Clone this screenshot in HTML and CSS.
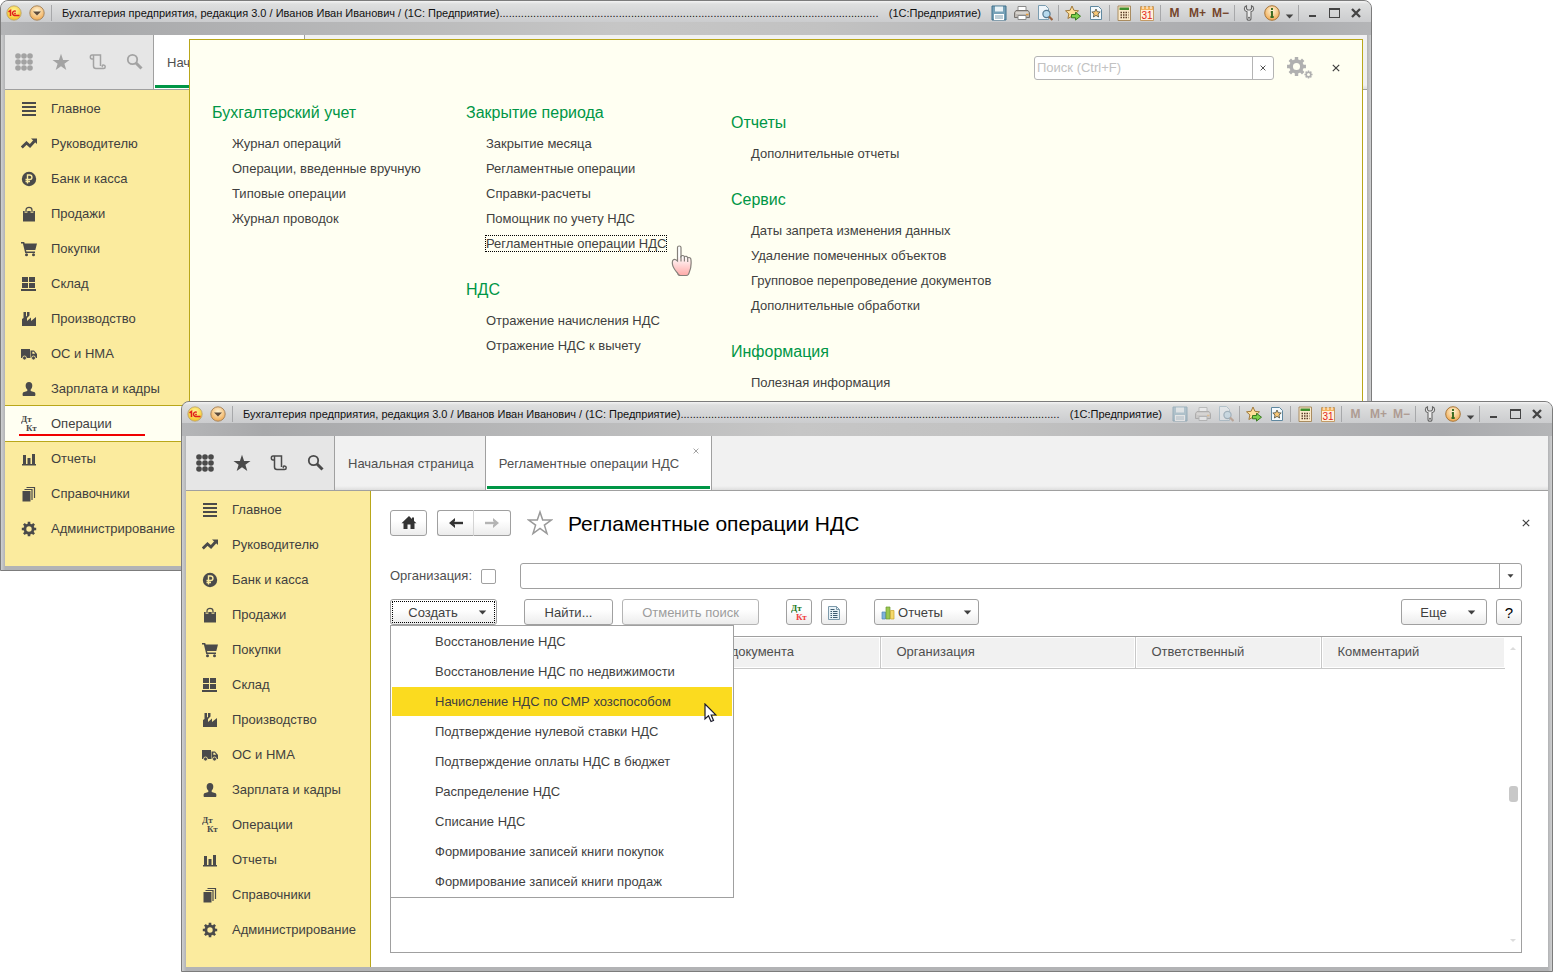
FILE: index.html
```html
<!DOCTYPE html>
<html lang="ru">
<head>
<meta charset="utf-8">
<title>Бухгалтерия предприятия, редакция 3.0</title>
<link rel="stylesheet" href="styles.css">
</head>
<body>
<svg class="sprite" aria-hidden="true">
  <defs>
    <radialGradient id="gold" cx="50%" cy="35%" r="65%"><stop offset="0" stop-color="#fff6d8"/><stop offset="1" stop-color="#f0a850"/></radialGradient>
    <radialGradient id="sun" cx="50%" cy="35%" r="65%"><stop offset="0" stop-color="#fff9a0"/><stop offset="1" stop-color="#f5c020"/></radialGradient>
    <linearGradient id="skin" x1="0" y1="0" x2="0" y2="1"><stop offset="0.35" stop-color="#fff"/><stop offset="1" stop-color="#ffaaa8"/></linearGradient>
  </defs>
  <symbol id="i-logo" viewBox="0 0 16 16"><circle cx="8" cy="8" r="7.2" fill="url(#sun)" stroke="#b5a070" stroke-width=".8"/><path d="M2.500 6.800 4.500 5.500V11M9.800 6.300a2.200 2.200 0 1 0-1.400 4.100h5.100M8.200 8.500h1.600" fill="none" stroke="#e0201b" stroke-width="1.500"/></symbol>
  <symbol id="i-down" viewBox="0 0 16 16"><circle cx="8" cy="8" r="7.2" fill="url(#gold)" stroke="#a88860" stroke-width="1"/><path d="M4 6.5h8L8 10.5z" fill="#5c4a3c"/></symbol>
  <symbol id="i-save" viewBox="0 0 16 16"><path d="M1 1h14v14H1z" fill="#78a2b8" stroke="#3f708c"/><path d="M4 1.5h8v5H4z" fill="#e9f2f6"/><path d="M3 9h10v6H3z" fill="#fff"/><path d="M4 11h8M4 13h8" stroke="#7a9cae"/></symbol>
  <symbol id="i-print" viewBox="0 0 16 16"><path d="M4 1.500h8v5H4z" fill="#fff" stroke="#8a8a8a"/><path d="M2 5.500h12l1.500 2v5H.5v-5z" fill="#bdb8b3" stroke="#77736f"/><path d="M2 8h12" stroke="#f2efe9"/><path d="M4 10.500h8v4H4z" fill="#fff" stroke="#8a8a8a"/><path d="M12 9.500h2.500" stroke="#e59a3a" stroke-width="1.500"/></symbol>
  <symbol id="i-preview" viewBox="0 0 16 16"><path d="M1.500.5h7l3 3v11h-10z" fill="#eef5fa" stroke="#7a9cb0"/><circle cx="9.500" cy="9" r="3.600" fill="#b7daee" stroke="#557a92" stroke-width="1.200"/><path d="m12 11.500 3.500 3.600" stroke="#9a6440" stroke-width="2.200"/></symbol>
  <symbol id="i-favadd" viewBox="0 0 16 16"><path d="m7 1 1.900 4.300 4.600.5-3.400 3.100 1 4.600L7 11.100l-4.100 2.400 1-4.600L.5 5.800l4.600-.5z" fill="#ffdf9a" stroke="#a07a3c"/><path d="M6.500 9.500h4V7.300l5 3.900-5 3.900v-2.300h-4z" fill="#7cd04c" stroke="#3a7a22"/></symbol>
  <symbol id="i-fav" viewBox="0 0 16 16"><path d="M2.500 1.500h8l3 3v10h-11z" fill="#f4fafd" stroke="#5f88a0"/><path d="m8 4 1.200 2.700 3 .3L10 9l.6 3L8 10.400 5.400 12 6 9 3.800 7l3-.3z" fill="#f8c878" stroke="#4c4c40" stroke-width=".8"/></symbol>
  <symbol id="i-calc" viewBox="0 0 16 16"><path d="M2 1h12.500v14.500H2z" fill="#fbeacb" stroke="#a98c60"/><path d="M3.500 2.500h9.500V5H3.500z" fill="#3f8f2c"/><path d="M4.500 7.500h8M4.500 10h8M4.500 12.500h8" stroke="#5a3d28" stroke-width="1.300" stroke-dasharray="1.500 1"/></symbol>
  <symbol id="i-cal" viewBox="0 0 16 16"><path d="M1.500 1.500h13v14h-13z" fill="#fff1dc" stroke="#c39b66"/><path d="M2 2h12v3H2z" fill="#f3b25c"/><path d="M4 1v3M8 1v3M12 1v3" stroke="#fff"/><text x="8" y="14" text-anchor="middle" class="cal-text">31</text></symbol>
  <symbol id="i-wrench" viewBox="0 0 16 16"><path d="M5.500.8c-3 1.200-2.800 5.200.5 6v6.400c0 2.700 4 2.700 4 0V6.800c3.300-.8 3.500-4.800.5-6v3L9.300 5H6.700L5.500 3.800z" fill="#ececec" stroke="#666" stroke-width="1.100"/><circle cx="8" cy="12.800" r="1" fill="#666"/></symbol>
  <symbol id="i-info" viewBox="0 0 16 16"><circle cx="8" cy="8" r="7.300" fill="url(#gold)" stroke="#a8783c"/><path d="M8 3v2M6.800 7H8v4.500M6.500 12h3.200" fill="none" stroke="#386a20" stroke-width="1.900"/></symbol>
  <symbol id="i-grid" viewBox="0 0 18 18"><g fill="currentColor"><circle cx="3" cy="3" r="2.800"/><circle cx="9" cy="3" r="2.800"/><circle cx="15" cy="3" r="2.800"/><circle cx="3" cy="9" r="2.800"/><circle cx="9" cy="9" r="2.800"/><circle cx="15" cy="9" r="2.800"/><circle cx="3" cy="15" r="2.800"/><circle cx="9" cy="15" r="2.800"/><circle cx="15" cy="15" r="2.800"/></g></symbol>
  <symbol id="i-star" viewBox="0 0 18 18"><path d="m9 .8 2.100 6.100h6.400l-5.100 3.900 1.900 6.200L9 13.300 3.700 17l1.900-6.200L.5 6.900h6.400z" fill="currentColor"/></symbol>
  <symbol id="i-scroll" viewBox="0 0 18 18"><path d="M4.500 6H3C.8 6 .8 2 3 2h8.500v11M4.500 2.500v10.500c0 1.500.8 2.500 2.500 2.500h7.500c2.300 0 2.300-3.500 0-3.500-1.500 0-1.500 1.500-.7 1.800" fill="none" stroke="currentColor" stroke-width="1.500"/></symbol>
  <symbol id="i-search" viewBox="0 0 18 18"><circle cx="6.500" cy="6.500" r="4.700" fill="none" stroke="currentColor" stroke-width="1.800"/><path d="m10 10 5.500 5.500" stroke="currentColor" stroke-width="3"/></symbol>
  <symbol id="i-main" viewBox="0 0 16 16"><path d="M1 2h14M1 6h14M1 10h14M1 14h14" stroke="currentColor" stroke-width="2"/></symbol>
  <symbol id="i-trend" viewBox="0 0 16 16"><path d="m.8 11.500 4.700-4.500 3.500 3 4.500-5" fill="none" stroke="currentColor" stroke-width="2.800"/><path d="M10 2.500h6V8z" fill="currentColor"/></symbol>
  <symbol id="i-rub" viewBox="0 0 16 16"><circle cx="8" cy="8" r="7.200" fill="currentColor"/><path d="M6.500 12.500V4h2.200c3 0 3 4.500 0 4.500H4.500M4.500 10.500H9" fill="none" stroke="#fbeb9e" stroke-width="1.400"/></symbol>
  <symbol id="i-bag" viewBox="0 0 16 16"><path d="M2 5h12v10.500H2z" fill="currentColor"/><path d="M5 7V4c0-3.500 6-3.500 6 0v3" fill="none" stroke="#fbeb9e" stroke-width="2.600"/><path d="M5 6.500V4c0-3.500 6-3.500 6 0v2.500" fill="none" stroke="currentColor" stroke-width="1.200"/></symbol>
  <symbol id="i-cart" viewBox="0 0 16 16"><path d="M0 1h3.200l.5 1.500H16L14.300 9H5l.4 1.500H14V12H4.200L1.900 2.400H0z" fill="currentColor"/><circle cx="5.500" cy="13.800" r="1.500" fill="currentColor"/><circle cx="12.500" cy="13.800" r="1.500" fill="currentColor"/></symbol>
  <symbol id="i-store" viewBox="0 0 16 16"><path d="M1 1h6v5H1zM8 1h6v5H8zM1 7h6v5H1zM8 7h6v5H8zM0 13h15v2H0z" fill="currentColor"/></symbol>
  <symbol id="i-factory" viewBox="0 0 16 16"><path d="M1 15V8l1.500-1V1H5v4.500l1-.5V1h2.500v3.500L6 7v3l4-3.500V10l5-4v9z" fill="currentColor"/></symbol>
  <symbol id="i-truck" viewBox="0 0 16 16"><path d="M0 3h9v9H0zM9.500 4.500H13l3 3.500v4H9.500z" fill="currentColor"/><path d="M11.300 5.800h1.500l1.300 2h-2.800z" fill="#fbeb9e"/><circle cx="3.500" cy="12" r="2" fill="currentColor" stroke="#fbeb9e" stroke-width=".8"/><circle cx="12.500" cy="12" r="2" fill="currentColor" stroke="#fbeb9e" stroke-width=".8"/></symbol>
  <symbol id="i-person" viewBox="0 0 16 16"><path d="M8 1c4.500 0 3.800 6 1.700 7.500V10l4 1.200c.8.300 1 3.300.3 3.800H2c-.7-.5-.5-3.500.3-3.800l4-1.200V8.500C4.200 7 3.500 1 8 1z" fill="currentColor"/></symbol>
  <symbol id="i-dtkt" viewBox="0 0 16 16"><text x="0" y="6" class="dk-text dk-text--dt">Дт</text><text x="5" y="15" class="dk-text dk-text--kt">Кт</text></symbol>
  <symbol id="i-bars" viewBox="0 0 16 16"><path d="M2 4h3v9H2zM6.500 7h3v6h-3zM11 3h3v10h-3zM1 13h14v1.500H1z" fill="currentColor"/></symbol>
  <symbol id="i-books" viewBox="0 0 16 16"><path d="M1.500 5h8v10.500h-8z" fill="currentColor"/><path d="M3.500 3.500H11V14M5.500 1.500h8V12" fill="none" stroke="currentColor" stroke-width="1.200"/></symbol>
  <symbol id="i-gear" viewBox="0 0 16 16"><circle cx="8" cy="8" r="4.100" fill="none" stroke="currentColor" stroke-width="2.800"/><path d="M8 .8v3M8 12.200v3M.8 8h3M12.200 8h3M2.900 2.900l2 2M11.100 11.100l2 2M2.900 13.100l2-2M11.100 4.900l2-2" stroke="currentColor" stroke-width="2.600"/></symbol>
  <symbol id="i-x" viewBox="0 0 10 10"><path d="m1 1 8 8M9 1 1 9" stroke="currentColor" stroke-width="1.500"/></symbol>
  <symbol id="i-xb" viewBox="0 0 10 10"><path d="m1 1 8 8M9 1 1 9" stroke="currentColor" stroke-width="2.300"/></symbol>
  <symbol id="i-caret" viewBox="0 0 10 6"><path d="M.5.500h9L5 5.500z" fill="currentColor"/></symbol>
</svg>

<div class="desktop">
  <section class="window window--back">
    <header class="titlebar">
      <svg class="ic16"><use href="#i-logo"/></svg>
      <button class="tb tb--menu" aria-label="Меню"><svg class="ic16"><use href="#i-down"/></svg></button>
      <i class="sep sep--title"></i>
      <span class="title">Бухгалтерия предприятия, редакция 3.0 / Иванов Иван Иванович / (1С: Предприятие)............................................................................................................................</span>
      <span class="title-app">(1С:Предприятие)</span>
      <div class="tb-group">
        <button class="tb" aria-label="Сохранить"><svg class="ic16"><use href="#i-save"/></svg></button>
        <button class="tb" aria-label="Печать"><svg class="ic16"><use href="#i-print"/></svg></button>
        <button class="tb" aria-label="Просмотр"><svg class="ic16"><use href="#i-preview"/></svg></button>
        <i class="sep"></i>
        <button class="tb" aria-label="В избранное"><svg class="ic16"><use href="#i-favadd"/></svg></button>
        <button class="tb" aria-label="Избранное"><svg class="ic16"><use href="#i-fav"/></svg></button>
        <i class="sep"></i>
        <button class="tb" aria-label="Калькулятор"><svg class="ic16"><use href="#i-calc"/></svg></button>
        <button class="tb" aria-label="Календарь"><svg class="ic16"><use href="#i-cal"/></svg></button>
        <i class="sep"></i>
        <button class="tb tb--mem">M</button>
        <button class="tb tb--mem">M+</button>
        <button class="tb tb--mem">M−</button>
        <i class="sep"></i>
        <button class="tb" aria-label="Сервис"><svg class="ic16"><use href="#i-wrench"/></svg></button>
        <button class="tb" aria-label="Справка"><svg class="ic16"><use href="#i-info"/></svg></button>
        <button class="tb tb--more" aria-label="Ещё"><svg class="caret"><use href="#i-caret"/></svg></button>
        <i class="sep"></i>
        <button class="tb tb--win" aria-label="Свернуть"><i class="win-min"></i></button>
        <button class="tb tb--win" aria-label="Развернуть"><i class="win-max"></i></button>
        <button class="tb tb--win" aria-label="Закрыть"><svg class="ic10"><use href="#i-xb"/></svg></button>
      </div>
    </header>
    <div class="client">
      <div class="tabs">
        <div class="tools tools--dim">
          <button class="tool" aria-label="Разделы"><svg class="ic18"><use href="#i-grid"/></svg></button>
          <button class="tool" aria-label="Избранное"><svg class="ic18"><use href="#i-star"/></svg></button>
          <button class="tool" aria-label="История"><svg class="ic18"><use href="#i-scroll"/></svg></button>
          <button class="tool" aria-label="Поиск"><svg class="ic18"><use href="#i-search"/></svg></button>
        </div>
        <a class="tab tab--active" href="#">Начальная страница</a>
      </div>
      <div class="work">
        <nav class="side">
          <a class="side-item" href="#"><svg class="ic16"><use href="#i-main"/></svg>Главное</a>
          <a class="side-item" href="#"><svg class="ic16"><use href="#i-trend"/></svg>Руководителю</a>
          <a class="side-item" href="#"><svg class="ic16"><use href="#i-rub"/></svg>Банк и касса</a>
          <a class="side-item" href="#"><svg class="ic16"><use href="#i-bag"/></svg>Продажи</a>
          <a class="side-item" href="#"><svg class="ic16"><use href="#i-cart"/></svg>Покупки</a>
          <a class="side-item" href="#"><svg class="ic16"><use href="#i-store"/></svg>Склад</a>
          <a class="side-item" href="#"><svg class="ic16"><use href="#i-factory"/></svg>Производство</a>
          <a class="side-item" href="#"><svg class="ic16"><use href="#i-truck"/></svg>ОС и НМА</a>
          <a class="side-item" href="#"><svg class="ic16"><use href="#i-person"/></svg>Зарплата и кадры</a>
          <a class="side-item side-item--current" href="#"><svg class="ic16"><use href="#i-dtkt"/></svg>Операции</a>
          <a class="side-item" href="#"><svg class="ic16"><use href="#i-bars"/></svg>Отчеты</a>
          <a class="side-item" href="#"><svg class="ic16"><use href="#i-books"/></svg>Справочники</a>
          <a class="side-item" href="#"><svg class="ic16"><use href="#i-gear"/></svg>Администрирование</a>
        </nav>
      </div>
      <div class="panel">
        <div class="panel-top">
          <div class="search">
            <input class="search-input" type="text" placeholder="Поиск (Ctrl+F)" aria-label="Поиск">
            <button class="search-clear" aria-label="Очистить"><svg class="ic6"><use href="#i-x"/></svg></button>
          </div>
          <button class="plain gears" aria-label="Настройка"><svg class="gear-big"><use href="#i-gear"/></svg><svg class="gear-small"><use href="#i-gear"/></svg></button>
          <button class="plain" aria-label="Закрыть"><svg class="ic8"><use href="#i-x"/></svg></button>
        </div>
        <div class="panel-cols">
          <div class="col">
            <section class="group">
              <h2 class="group-title">Бухгалтерский учет</h2>
              <a class="cmd" href="#">Журнал операций</a>
              <a class="cmd" href="#">Операции, введенные вручную</a>
              <a class="cmd" href="#">Типовые операции</a>
              <a class="cmd" href="#">Журнал проводок</a>
            </section>
          </div>
          <div class="col">
            <section class="group">
              <h2 class="group-title">Закрытие периода</h2>
              <a class="cmd" href="#">Закрытие месяца</a>
              <a class="cmd" href="#">Регламентные операции</a>
              <a class="cmd" href="#">Справки-расчеты</a>
              <a class="cmd" href="#">Помощник по учету НДС</a>
              <a class="cmd" href="#"><span class="cmd-focus">Регламентные операции НДС<svg class="hand" viewBox="0 0 24 32"><path d="M6.500 2.500c0-2 3.500-2 3.500 0v9c1-1.500 3-1.200 3.400.3 1.200-1 3-.5 3.300 1 1.500-.7 3.300-.2 3.300 2.200.5 6 0 9-1.800 12.500-.5 2.500-1 3-3 3H9.500c-2 0-2.500-.5-3-2.500C4 25 2 23 1.500 19.500c-.8-5 1.500-6.500 5-3.500z" fill="url(#skin)" stroke="#85807a" stroke-width="1.200"/><path d="M10 11v5.500M13.400 12v4.500M16.700 13v4" fill="none" stroke="#85807a" stroke-width="1.200"/></svg></span></a>
            </section>
            <section class="group">
              <h2 class="group-title">НДС</h2>
              <a class="cmd" href="#">Отражение начисления НДС</a>
              <a class="cmd" href="#">Отражение НДС к вычету</a>
            </section>
          </div>
          <div class="col col--lower">
            <section class="group">
              <h2 class="group-title">Отчеты</h2>
              <a class="cmd" href="#">Дополнительные отчеты</a>
            </section>
            <section class="group">
              <h2 class="group-title">Сервис</h2>
              <a class="cmd" href="#">Даты запрета изменения данных</a>
              <a class="cmd" href="#">Удаление помеченных объектов</a>
              <a class="cmd" href="#">Групповое перепроведение документов</a>
              <a class="cmd" href="#">Дополнительные обработки</a>
            </section>
            <section class="group">
              <h2 class="group-title">Информация</h2>
              <a class="cmd" href="#">Полезная информация</a>
            </section>
          </div>
        </div>
      </div>
    </div>
  </section>

  <section class="window window--front">
    <header class="titlebar">
      <svg class="ic16"><use href="#i-logo"/></svg>
      <button class="tb tb--menu" aria-label="Меню"><svg class="ic16"><use href="#i-down"/></svg></button>
      <i class="sep sep--title"></i>
      <span class="title">Бухгалтерия предприятия, редакция 3.0 / Иванов Иван Иванович / (1С: Предприятие)............................................................................................................................</span>
      <span class="title-app">(1С:Предприятие)</span>
      <div class="tb-group">
        <button class="tb" disabled aria-label="Сохранить"><svg class="ic16"><use href="#i-save"/></svg></button>
        <button class="tb" disabled aria-label="Печать"><svg class="ic16"><use href="#i-print"/></svg></button>
        <button class="tb" disabled aria-label="Просмотр"><svg class="ic16"><use href="#i-preview"/></svg></button>
        <i class="sep"></i>
        <button class="tb" aria-label="В избранное"><svg class="ic16"><use href="#i-favadd"/></svg></button>
        <button class="tb" aria-label="Избранное"><svg class="ic16"><use href="#i-fav"/></svg></button>
        <i class="sep"></i>
        <button class="tb" aria-label="Калькулятор"><svg class="ic16"><use href="#i-calc"/></svg></button>
        <button class="tb" aria-label="Календарь"><svg class="ic16"><use href="#i-cal"/></svg></button>
        <i class="sep"></i>
        <button class="tb tb--mem" disabled>M</button>
        <button class="tb tb--mem" disabled>M+</button>
        <button class="tb tb--mem" disabled>M−</button>
        <i class="sep"></i>
        <button class="tb" aria-label="Сервис"><svg class="ic16"><use href="#i-wrench"/></svg></button>
        <button class="tb" aria-label="Справка"><svg class="ic16"><use href="#i-info"/></svg></button>
        <button class="tb tb--more" aria-label="Ещё"><svg class="caret"><use href="#i-caret"/></svg></button>
        <i class="sep"></i>
        <button class="tb tb--win" aria-label="Свернуть"><i class="win-min"></i></button>
        <button class="tb tb--win" aria-label="Развернуть"><i class="win-max"></i></button>
        <button class="tb tb--win" aria-label="Закрыть"><svg class="ic10"><use href="#i-xb"/></svg></button>
      </div>
    </header>
    <div class="client">
      <div class="tabs">
        <div class="tools">
          <button class="tool" aria-label="Разделы"><svg class="ic18"><use href="#i-grid"/></svg></button>
          <button class="tool" aria-label="Избранное"><svg class="ic18"><use href="#i-star"/></svg></button>
          <button class="tool" aria-label="История"><svg class="ic18"><use href="#i-scroll"/></svg></button>
          <button class="tool" aria-label="Поиск"><svg class="ic18"><use href="#i-search"/></svg></button>
        </div>
        <a class="tab" href="#">Начальная страница</a>
        <a class="tab tab--active tab--closable" href="#">Регламентные операции НДС<svg class="tab-close"><use href="#i-x"/></svg></a>
      </div>
      <div class="work">
        <nav class="side">
          <a class="side-item" href="#"><svg class="ic16"><use href="#i-main"/></svg>Главное</a>
          <a class="side-item" href="#"><svg class="ic16"><use href="#i-trend"/></svg>Руководителю</a>
          <a class="side-item" href="#"><svg class="ic16"><use href="#i-rub"/></svg>Банк и касса</a>
          <a class="side-item" href="#"><svg class="ic16"><use href="#i-bag"/></svg>Продажи</a>
          <a class="side-item" href="#"><svg class="ic16"><use href="#i-cart"/></svg>Покупки</a>
          <a class="side-item" href="#"><svg class="ic16"><use href="#i-store"/></svg>Склад</a>
          <a class="side-item" href="#"><svg class="ic16"><use href="#i-factory"/></svg>Производство</a>
          <a class="side-item" href="#"><svg class="ic16"><use href="#i-truck"/></svg>ОС и НМА</a>
          <a class="side-item" href="#"><svg class="ic16"><use href="#i-person"/></svg>Зарплата и кадры</a>
          <a class="side-item" href="#"><svg class="ic16"><use href="#i-dtkt"/></svg>Операции</a>
          <a class="side-item" href="#"><svg class="ic16"><use href="#i-bars"/></svg>Отчеты</a>
          <a class="side-item" href="#"><svg class="ic16"><use href="#i-books"/></svg>Справочники</a>
          <a class="side-item" href="#"><svg class="ic16"><use href="#i-gear"/></svg>Администрирование</a>
        </nav>
        <main class="form">
          <div class="form-head">
            <button class="btn btn--home" aria-label="Домой"><svg class="ic16" viewBox="0 0 16 16"><path d="M8 1 .5 8.200h2V14h4V9.500h3V14h4V8.200h2L13 6V2.500h-2V4z" fill="#333"/></svg></button>
            <div class="nav-pair">
              <button class="btn" aria-label="Назад"><svg class="ic16" viewBox="0 0 16 16"><path d="M3 8h12" stroke="#333" stroke-width="2.400"/><path d="M1 8l6-5v3L5 8l2 2v3z" fill="#333"/></svg></button>
              <button class="btn" aria-label="Вперед"><svg class="ic16" viewBox="0 0 16 16"><path d="M1 8h12" stroke="#b4b4b4" stroke-width="2.400"/><path d="M15 8 9 3v3l2 2-2 2v3z" fill="#b4b4b4"/></svg></button>
            </div>
            <button class="plain fav" aria-label="В избранное"><svg class="fav-star" viewBox="0 0 26 26"><path d="m13 2 2.700 8h8.600l-6.900 5.100 2.600 8.400-7-5.100-7 5.100 2.600-8.400L1.700 10h8.600z" fill="#fff" stroke="#999" stroke-width="1.500"/></svg></button>
            <h1 class="form-title">Регламентные операции НДС</h1>
            <button class="plain form-close" aria-label="Закрыть"><svg class="ic8"><use href="#i-x"/></svg></button>
          </div>
          <div class="filter">
            <label class="filter-label" for="org-on">Организация:</label>
            <input class="check" type="checkbox" id="org-on">
            <div class="combo">
              <input class="combo-input" type="text" aria-label="Организация">
              <button class="combo-drop" aria-label="Выбрать"><svg class="caret caret--small"><use href="#i-caret"/></svg></button>
            </div>
          </div>
          <div class="commands">
            <div class="create">
              <button class="btn btn--create">Создать<svg class="caret"><use href="#i-caret"/></svg></button>
              <ul class="menu">
                <li><button class="menu-item">Восстановление НДС</button></li>
                <li><button class="menu-item">Восстановление НДС по недвижимости</button></li>
                <li><button class="menu-item menu-item--hot">Начисление НДС по СМР хозспособом</button></li>
                <li><button class="menu-item">Подтверждение нулевой ставки НДС</button></li>
                <li><button class="menu-item">Подтверждение оплаты НДС в бюджет</button></li>
                <li><button class="menu-item">Распределение НДС</button></li>
                <li><button class="menu-item">Списание НДС</button></li>
                <li><button class="menu-item">Формирование записей книги покупок</button></li>
                <li><button class="menu-item">Формирование записей книги продаж</button></li>
              </ul>
              <svg class="pointer" viewBox="0 0 13 20"><path d="M1 1v15l3.500-3.200L7 18.500l2.500-1L7.200 12H12z" fill="#fff" stroke="#1c1c2c" stroke-width="1.200"/></svg>
            </div>
            <button class="btn btn--find">Найти...</button>
            <button class="btn btn--cancel" disabled>Отменить поиск</button>
            <button class="btn btn--icon btn--dtkt" aria-label="Проводки"><svg class="ic16"><use href="#i-dtkt"/></svg></button>
            <button class="btn btn--icon" aria-label="Реестр"><svg class="ic16" viewBox="0 0 16 16"><path d="M2.500 1.500h8l3 3v10h-11z" fill="#e8f2f7" stroke="#7d9aab"/><path d="M10.500 1.500v3h3" fill="none" stroke="#7d9aab"/><path d="M4.500 4.500h4M4.500 6.500h1.500M7 6.500h4.500M4.500 8.500h1.500M7 8.500h4.500M4.500 10.500h1.500M7 10.500h4.500M4.500 12.500h1.500M7 12.500h4.500" stroke="#3e5c70"/></svg></button>
            <button class="btn btn--reports"><svg class="ic14" viewBox="0 0 14 14"><path d="M1 6h3.500v7H1z" fill="#7fb2dc" stroke="#4d86b8" stroke-width=".7"/><path d="M5 1h4v12H5z" fill="#9bc850" stroke="#6c9a30" stroke-width=".7"/><path d="M9.500 4.500H13V13H9.500z" fill="#f5d86a" stroke="#c9a32a" stroke-width=".7"/></svg>Отчеты<svg class="caret"><use href="#i-caret"/></svg></button>
            <button class="btn btn--more">Еще<svg class="caret"><use href="#i-caret"/></svg></button>
            <button class="btn btn--icon btn--help">?</button>
          </div>
          <div class="grid">
            <table class="table">
              <colgroup><col class="c-lead"><col class="c-doc"><col class="c-org"><col class="c-resp"><col></colgroup>
              <thead><tr><th></th><th>Вид документа</th><th>Организация</th><th>Ответственный</th><th>Комментарий</th></tr></thead>
            </table>
            <div class="scroll">
              <i class="scroll-up"></i><i class="scroll-thumb"></i><i class="scroll-down"></i>
            </div>
          </div>
        </main>
      </div>
    </div>
  </section>
</div>
</body>
</html>
```
FILE: styles.css
```css
* { box-sizing: border-box; }

body {
  margin: 0;
  background: #fff;
  color: #3f3f3f;
  font: 13px/16px "Liberation Sans", Arial, sans-serif;
}

a { color: inherit; text-decoration: none; }

button, input {
  margin: 0;
  padding: 0;
  border: 0;
  background: none;
  color: inherit;
  font: inherit;
}

svg { flex: none; display: block; }

.sprite { position: absolute; width: 0; height: 0; }
.ic6 { width: 6px; height: 6px; }
.ic8 { width: 8px; height: 8px; }
.ic10 { width: 10px; height: 10px; }
.ic14 { width: 14px; height: 14px; }
.ic16 { width: 16px; height: 16px; }
.ic18 { width: 18px; height: 18px; }
.caret { width: 9px; height: 5px; }
.caret--small { width: 7px; height: 4px; }

.cal-text { font: 10px "Liberation Sans", sans-serif; fill: #e2231a; }
.dk-text { font: bold 9px "Liberation Serif", serif; fill: currentColor; }
.dk-text--dt { fill: var(--dt, currentColor); }
.dk-text--kt { fill: var(--kt, currentColor); }

.desktop { position: relative; min-height: 100vh; overflow: hidden; }

/* Window frame */
.window {
  position: absolute;
  padding: 0 4px 4px;
  border: 1px solid #7c7c7c;
  border-radius: 8px 8px 0 0;
  background: linear-gradient(90deg, #cfd0d1, #b2b3b5 4px, #b2b3b5 calc(100% - 4px), #cfd0d1);
}
.window--back { left: 0; right: 187px; top: 0; }
.window--front { left: 181px; right: 6px; top: 401px; }

.titlebar {
  display: flex;
  align-items: center;
  height: 34px;
  margin: 0 -4px;
  padding: 0 4px 10px 5px;
  border-radius: 7px 7px 0 0;
  background:
    linear-gradient(#f4f4f4, #dedfdf 3px, #cbccce 21px) top / 100% 21px no-repeat,
    linear-gradient(90deg, #b4b5b7, #a8a9ab 6%, #c6c6c6 45%, #c2c2c2 60%, #a9aaad 92%, #b4b5b7);
  color: #111;
  font-size: 11px;
}
.tb {
  display: flex;
  align-items: center;
  justify-content: center;
  flex: none;
  width: 23px;
  height: 22px;
}
.tb:disabled { opacity: .4; }
.tb--menu { margin-left: 3px; }
.tb--mem { color: #75452c; font-weight: bold; font-size: 12px; }
.tb--more { width: 13px; padding-top: 6px; color: #444; }
.tb--win { width: 22px; color: #444; }
.tb-group { display: flex; align-items: center; flex: none; margin-left: 6px; }
.sep { flex: none; width: 1px; height: 16px; margin: 0 2px; background: #a7a8aa; }
.sep--title { margin: 0 10px 0 3px; }
.title { flex: 1 1 0; overflow: hidden; white-space: nowrap; }
.title-app { flex: none; margin-left: 5px; }
.win-min { width: 7px; height: 2px; margin-top: 6px; background: #444; }
.win-max { width: 11px; height: 10px; border: 1px solid #444; border-top-width: 2px; }

.client { position: relative; background: #fff; }

/* Tab strip */
.tabs {
  display: flex;
  height: 55px;
  border-bottom: 1px solid #a0a0a0;
  background: linear-gradient(#f1f1f1 50px, #dedede);
}
.tools {
  display: flex;
  align-items: center;
  width: 149px;
  border-right: 1px solid #a0a0a0;
  background: #e6e6e6;
  color: #4a4a4a;
}
.tools--dim { color: #a3a3a3; }
.tool { display: flex; justify-content: center; width: 37px; }
.tab {
  position: relative;
  display: flex;
  align-items: center;
  padding: 2px 11px 0 13px;
  border-right: 1px solid #a0a0a0;
  color: #4f4f4f;
}
.tab--active { background: #fff; }
.tab--active::after {
  content: "";
  position: absolute;
  left: 1px;
  right: 1px;
  bottom: 1px;
  height: 3px;
  background: #009646;
}
.tab--closable { padding-right: 32px; }
.tab-close { position: absolute; top: 12px; right: 12px; width: 6px; height: 6px; color: #999; }

.work { display: flex; }

/* Sections */
.side {
  flex: none;
  width: 185px;
  padding: 1px 0 20px;
  border-right: 1px solid #b9a71a;
  background: #fbeb9e;
}
.side-item {
  position: relative;
  display: flex;
  align-items: center;
  gap: 14px;
  height: 35px;
  padding-left: 16px;
  white-space: nowrap;
}
.side-item svg { color: #4a4a4a; }
.side-item--current { background: #fffff2; box-shadow: 0 -1px #b9a71a, 0 1px #b9a71a; }
.side-item--current::after {
  content: "";
  position: absolute;
  left: 14px;
  bottom: 5px;
  width: 126px;
  height: 2px;
  background: #f00000;
}

/* Section panel */
.panel {
  position: absolute;
  left: 184px;
  right: 4px;
  top: 4px;
  bottom: 0;
  border: 1px solid #b9a71a;
  background: #fffff2;
}
.panel-top {
  display: flex;
  align-items: center;
  justify-content: flex-end;
  height: 56px;
  padding-right: 22px;
}
.plain { display: flex; align-items: center; }
.search {
  display: flex;
  width: 240px;
  height: 24px;
  border: 1px solid #b4b4b4;
  border-radius: 3px;
  background: #fff;
}
.search-input { flex: 1; min-width: 0; padding: 0 2px; }
.search-input::placeholder { color: #c2c2c2; opacity: 1; }
.search-clear {
  display: flex;
  align-items: center;
  justify-content: center;
  width: 21px;
  border-left: 1px solid #b4b4b4;
  border-radius: 0 3px 3px 0;
}
.gears { margin: 0 19px 0 12px; color: #b0b0b0; }
.gear-big { width: 21px; height: 21px; margin-bottom: 4px; }
.gear-small { width: 9px; height: 9px; margin: 12px 0 0 -3px; }
.panel-cols {
  display: grid;
  grid-template-columns: 254px 265px 1fr;
  padding: 5px 22px 0;
}
.col { display: flex; flex-direction: column; gap: 22px; }
.col--lower { padding-top: 10px; }
.group-title {
  margin: 0 0 6px;
  color: #009646;
  font-weight: normal;
  font-size: 16px;
  line-height: 24px;
}
.cmd { display: block; padding-left: 20px; line-height: 25px; white-space: nowrap; }
.cmd-focus { position: relative; outline: 1px dotted #000; }
.hand { position: absolute; left: calc(100% + 5px); top: 9px; width: 24px; height: 32px; }

/* Form */
.form {
  display: flex;
  flex-direction: column;
  flex: 1;
  min-width: 0;
  padding: 19px 26px 14px 19px;
}
.form-head { display: flex; align-items: center; height: 26px; margin-right: -8px; }
.btn {
  display: flex;
  align-items: center;
  justify-content: center;
  height: 26px;
  border: 1px solid #a0a0a0;
  border-radius: 3px;
  background: linear-gradient(#fff 40%, #ececec);
  color: #3f3f3f;
}
.btn:disabled { border-color: #b4b4b4; color: #9c9c9c; }
.btn--home { width: 37px; margin-right: 10px; }
.nav-pair { display: flex; }
.nav-pair .btn { width: 37px; }
.nav-pair .btn:first-child { border-right-color: #d4d4d4; border-radius: 3px 0 0 3px; }
.nav-pair .btn:last-child { border-left: 0; border-radius: 0 3px 3px 0; }
.fav { margin: 0 15px 0 16px; }
.fav-star { width: 26px; height: 26px; }
.form-title { margin: 0; padding-top: 2px; color: #000; font-weight: normal; font-size: 21px; line-height: 26px; }
.form-close { margin-left: auto; }

.filter { display: flex; align-items: center; margin-top: 27px; }
.filter-label { width: 91px; color: #4f4f4f; }
.check {
  appearance: none;
  width: 15px;
  height: 15px;
  margin-right: 24px;
  border: 1px solid #a0a0a0;
  border-radius: 2px;
  background: #fff;
}
.combo {
  display: flex;
  flex: 1;
  height: 26px;
  border: 1px solid #a0a0a0;
  border-radius: 3px;
}
.combo-input { flex: 1; min-width: 0; padding: 0 4px; }
.combo-drop {
  display: flex;
  align-items: center;
  justify-content: center;
  width: 22px;
  border-left: 1px solid #a0a0a0;
}

.commands { display: flex; margin-top: 10px; }
.commands .btn { padding-top: 1px; }
.create { position: relative; margin-right: 27px; }
.btn--create { width: 107px; gap: 20px; padding-left: 8px; outline: 1px dotted #000; outline-offset: -3px; }
.btn--find { width: 89px; margin-right: 9px; }
.btn--cancel { width: 137px; margin-right: 27px; }
.btn--icon { width: 26px; }
.btn--dtkt { margin-right: 9px; --dt: #1f7a1f; --kt: #f04040; }
.btn--reports { width: 105px; margin-left: 27px; gap: 3px; }
.btn--reports .caret { margin-left: 17px; }
.btn--more { width: 86px; margin: 0 9px 0 auto; gap: 20px; padding-left: 8px; }
.btn--help { color: #000; font-size: 15px; }

.menu {
  position: absolute;
  z-index: 2;
  left: 0;
  top: 100%;
  width: 344px;
  margin: 0;
  padding: 1px 1px 0;
  border: 1px solid #a0a0a0;
  background: #fff;
  list-style: none;
}
.menu-item {
  display: block;
  width: 100%;
  height: 29px;
  margin-bottom: 1px;
  padding-left: 43px;
  text-align: left;
  white-space: nowrap;
}
.menu-item--hot { background: #fbdb1f; }
.pointer { position: absolute; z-index: 3; left: 314px; top: 104px; width: 13px; height: 20px; }

.grid {
  display: flex;
  flex: 1;
  align-items: stretch;
  margin-top: 11px;
  border: 1px solid #a0a0a0;
}
.table { flex: 1; align-self: flex-start; table-layout: fixed; border-collapse: collapse; }
.table th {
  height: 31px;
  padding: 0 16px;
  border-right: 1px solid #c8c8c8;
  border-bottom: 1px solid #c8c8c8;
  background: #f1f1f1;
  box-shadow: inset 0 0 0 1px #fff;
  color: #4f4f4f;
  font-weight: normal;
  text-align: left;
  white-space: nowrap;
}
.table th:last-child { border-right: 0; }
.c-lead { width: 296px; }
.c-doc { width: 193px; }
.c-org { width: 255px; }
.c-resp { width: 186px; }
.scroll { display: flex; flex-direction: column; align-items: center; width: 16px; padding: 10px 0; }
.scroll-up { border: 3px solid transparent; border-top: 0; border-bottom-color: #dcdcdc; }
.scroll-down { margin-top: auto; border: 3px solid transparent; border-bottom: 0; border-top-color: #dcdcdc; }
.scroll-thumb { width: 9px; height: 16px; margin-top: 136px; border-radius: 3px; background: #c8c8c8; }
```
